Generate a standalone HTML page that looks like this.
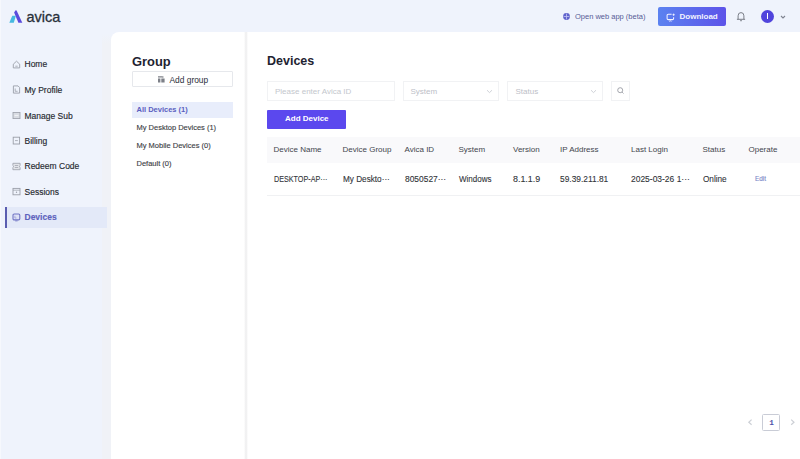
<!DOCTYPE html>
<html><head><meta charset="utf-8">
<style>
*{box-sizing:border-box;margin:0;padding:0}
html,body{width:800px;height:459px;overflow:hidden;background:#eff3fc;font-family:"Liberation Sans",sans-serif;position:relative}
.abs{position:absolute;white-space:nowrap}
#strip{position:absolute;left:101.5px;top:34px;width:10px;height:425px;background:linear-gradient(180deg,rgba(240,242,247,0) 0,#f0f2f7 10px)}
#lstrip{position:absolute;left:0;top:0;width:1px;height:459px;background:#f6f8fd}
#panel{position:absolute;left:111px;top:32px;width:689px;height:427px;background:#fff;border-top-left-radius:8px}
#divider{position:absolute;left:243.6px;top:32px;width:4px;height:427px;background:linear-gradient(90deg,rgba(250,250,250,0) 0,#ededee 50%,rgba(250,250,250,0) 100%)}
.nav{position:absolute;left:24.5px;font-size:8.5px;color:#26292f;-webkit-text-stroke:0.15px currentColor}
.navic{position:absolute;left:13px;width:7px;height:7px;border:1px solid #8a8f99;border-radius:1px}
.h{font-weight:bold;color:#1e2331;font-size:12.5px}
.th{position:absolute;top:145px;font-size:8px;color:#43464d}
.dots{font-size:8px;letter-spacing:-0.7px;color:#555a66}
.td{position:absolute;top:173.5px;font-size:8.7px;transform-origin:0 0;color:#303338;-webkit-text-stroke:0.1px currentColor}
</style></head><body>
<div id="strip"></div><div id="lstrip"></div>
<!-- logo -->
<svg class="abs" style="left:0;top:0" width="30" height="30" viewBox="0 0 30 30">
  <polygon points="14.1,12.6 15.6,10.2 16.6,10.4 22.3,22.8 18.4,22.8" fill="#5a4bdc"/>
  <polygon points="12.3,15.8 15.9,15.8 13.8,22.8 9.3,22.8" fill="#45b9e0"/>
</svg>
<div class="abs" style="left:26.5px;top:9px;font-size:14.5px;color:#28303a;-webkit-text-stroke:0.3px #28303a">avica</div>

<!-- header right -->
<svg class="abs" style="left:563px;top:13px" width="7" height="7" viewBox="0 0 7 7"><circle cx="3.5" cy="3.5" r="3.4" fill="#6063cc"/><path d="M0.6 3.5H6.4M3.5 0.6V6.4" stroke="#c3c4f2" stroke-width="0.8"/></svg>
<div class="abs" style="left:575px;top:12px;font-size:7.5px;color:#565b96">Open web app (beta)</div>
<div class="abs" style="left:658px;top:7px;width:68px;height:19px;border-radius:2px;background:linear-gradient(90deg,#5b82f0,#5d53e9)"></div>
<svg class="abs" style="left:665.5px;top:12.5px" width="10" height="9" viewBox="0 0 10 9"><path d="M5.6 1.2H2.3Q1.1 1.2 1.1 2.4V5.4Q1.1 6.6 2.3 6.6H6.4Q7.6 6.6 7.6 5.4V4.2" fill="none" stroke="#f4f4ff" stroke-width="1.05"/><path d="M7.6 0.6V2.8M6.5 1.7H8.7" stroke="#f4f4ff" stroke-width="0.9"/><path d="M3.2 8.3Q4.35 7.3 5.5 8.3" fill="none" stroke="#f4f4ff" stroke-width="0.9"/></svg>
<div class="abs" style="left:679.5px;top:11.7px;font-size:8px;font-weight:bold;color:#f3f3ff">Download</div>
<svg class="abs" style="left:736px;top:11px" width="10" height="11" viewBox="0 0 10 11"><path d="M0.9 8.3H9.1M2.1 8.3V4.8Q2.1 1.6 5 1.6Q7.9 1.6 7.9 4.8V8.3" fill="none" stroke="#7a7e87" stroke-width="1"/><path d="M4 9.4Q5 10.6 6 9.4" fill="none" stroke="#7a7e87" stroke-width="0.9"/></svg>
<div class="abs" style="left:761px;top:10px;width:13.4px;height:13.4px;border-radius:50%;background:#5044dc"></div>
<div class="abs" style="left:767px;top:13.4px;width:1.3px;height:6px;background:#fff"></div>
<svg class="abs" style="left:780px;top:15px" width="6" height="4" viewBox="0 0 6 4"><path d="M1 1L3 3L5 1" fill="none" stroke="#7f8390" stroke-width="1.1"/></svg>

<!-- sidebar -->
<svg class="abs" style="left:12px;top:60px" width="9" height="9" viewBox="0 0 9 9"><path d="M1.3 4.2L4.5 1.2L7.7 4.2V7.9H1.3Z" fill="none" stroke="#9a9ea8" stroke-width="0.9"/><path d="M3.3 6.2H5.7" stroke="#9a9ea8" stroke-width="0.8"/></svg>
<div class="nav" style="top:59.4px">Home</div>
<svg class="abs" style="left:12px;top:85px" width="9" height="9" viewBox="0 0 9 9"><path d="M1.4 0.9H6L7.6 2.5V8.1H1.4Z" fill="none" stroke="#9a9ea8" stroke-width="0.9"/><path d="M3.2 3.5V6.3H5.6" fill="none" stroke="#9a9ea8" stroke-width="0.8"/></svg>
<div class="nav" style="top:85px">My Profile</div>
<svg class="abs" style="left:12px;top:111px" width="9" height="9" viewBox="0 0 9 9"><rect x="1" y="1.4" width="7" height="6.2" fill="#d9dce3" stroke="#9a9ea8" stroke-width="0.8"/><path d="M2.5 4.5H6.5" stroke="#f2f3f6" stroke-width="0.9"/></svg>
<div class="nav" style="top:110.8px">Manage Sub</div>
<svg class="abs" style="left:12px;top:136px" width="9" height="9" viewBox="0 0 9 9"><rect x="1.2" y="1.2" width="6.4" height="6.8" fill="none" stroke="#9a9ea8" stroke-width="0.9"/><path d="M3 4.6H5.8" stroke="#9a9ea8" stroke-width="0.8"/></svg>
<div class="nav" style="top:135.9px">Billing</div>
<svg class="abs" style="left:12px;top:162px" width="9" height="9" viewBox="0 0 9 9"><path d="M0.9 1.3H8.1V3.6A1 1 0 0 0 8.1 5.4V7.7H0.9V5.4A1 1 0 0 0 0.9 3.6Z" fill="#e3e5ea" stroke="#9a9ea8" stroke-width="0.8"/><path d="M2.8 3.5H6.2M2.8 5.5H6.2" stroke="#9a9ea8" stroke-width="0.7"/></svg>
<div class="nav" style="top:161.3px">Redeem Code</div>
<svg class="abs" style="left:12px;top:187px" width="9" height="9" viewBox="0 0 9 9"><rect x="1" y="1.4" width="7" height="6.4" fill="none" stroke="#9a9ea8" stroke-width="0.9"/><path d="M1 3.2H8" stroke="#9a9ea8" stroke-width="0.7"/><circle cx="4.5" cy="5.3" r="0.7" fill="#9a9ea8"/></svg>
<div class="nav" style="top:186.7px">Sessions</div>
<div class="abs" style="left:7px;top:207px;width:100px;height:21px;background:#e3e9f8"></div>
<div class="abs" style="left:5px;top:207px;width:2px;height:21px;background:#5a5db0"></div>
<svg class="abs" style="left:12px;top:213px" width="9" height="9" viewBox="0 0 9 9"><rect x="1" y="1" width="6.8" height="5.9" rx="1.2" fill="#dde1f5" stroke="#7074c4" stroke-width="1.1"/><path d="M3.2 7.9H5.6" stroke="#7074c4" stroke-width="0.8"/><path d="M2.9 2.8V5H4.5" fill="none" stroke="#9a9dd8" stroke-width="0.8"/></svg>
<div class="nav" style="top:212.4px;color:#5d62bd;font-weight:bold">Devices</div>


<div id="panel"></div>
<div id="divider"></div>

<!-- group panel -->
<div class="abs h" style="left:132px;top:53.5px;font-size:12.9px">Group</div>
<div class="abs" style="left:132px;top:71px;width:101px;height:16.3px;border:1px solid #e6e8ec;border-radius:1px"></div>
<svg class="abs" style="left:157px;top:75px" width="9" height="9" viewBox="0 0 9 9"><path d="M1 1.2H5.5V2.6H1Z M1 3.6H3.4V7.6H1Z M4.3 3.6H7.6V7.6H4.3Z" fill="#7d8088"/><path d="M5.9 1V3" stroke="#7d8088" stroke-width="0.8"/></svg>
<div class="abs" style="left:169.5px;top:75.3px;font-size:8.4px;color:#2a2f3a">Add group</div>
<div class="abs" style="left:132px;top:101.5px;width:101px;height:16px;background:#e8edfb"></div>
<div class="abs" style="left:136.5px;top:105px;font-size:7.5px;font-weight:bold;color:#5a5fc0">All Devices (1)</div>
<div class="abs" style="left:136.5px;top:123px;font-size:7.5px;color:#3b3d43;-webkit-text-stroke:0.12px currentColor">My Desktop Devices (1)</div>
<div class="abs" style="left:136.5px;top:141px;font-size:7.5px;color:#3b3d43;-webkit-text-stroke:0.12px currentColor">My Mobile Devices (0)</div>
<div class="abs" style="left:136.5px;top:159px;font-size:7.5px;color:#3b3d43;-webkit-text-stroke:0.12px currentColor">Default (0)</div>

<!-- devices panel -->
<div class="abs h" style="left:267px;top:54px">Devices</div>
<div class="abs" style="left:267px;top:81px;width:127.5px;height:19.5px;border:1px solid #f1f2f4"></div>
<div class="abs" style="left:275px;top:87px;font-size:8px;color:#c4c7cd">Please enter Avica ID</div>
<div class="abs" style="left:403px;top:81px;width:96px;height:19.5px;border:1px solid #f1f2f4"></div>
<div class="abs" style="left:410.5px;top:86.8px;font-size:8px;color:#bdc0c7">System</div>
<div class="abs" style="left:507px;top:81px;width:95.5px;height:19.5px;border:1px solid #f1f2f4"></div>
<div class="abs" style="left:515.5px;top:86.8px;font-size:8px;color:#bdc0c7">Status</div>
<div class="abs" style="left:610.5px;top:81px;width:19.5px;height:19.5px;border:1px solid #f1f2f4"></div>
<svg class="abs" style="left:486px;top:88.8px" width="7" height="5" viewBox="0 0 7 5"><path d="M1 1.2L3.5 3.6L6 1.2" fill="none" stroke="#c4c7ce" stroke-width="0.8"/></svg>
<svg class="abs" style="left:590px;top:88.8px" width="7" height="5" viewBox="0 0 7 5"><path d="M1 1.2L3.5 3.6L6 1.2" fill="none" stroke="#c4c7ce" stroke-width="0.8"/></svg>
<svg class="abs" style="left:616px;top:86px" width="9" height="9" viewBox="0 0 9 9"><circle cx="4.2" cy="4.2" r="2.5" fill="none" stroke="#8e9199" stroke-width="0.8"/><path d="M6.1 6.1L7.5 7.5" stroke="#8e9199" stroke-width="0.8"/></svg>
<div class="abs" style="left:267px;top:110px;width:79px;height:18.5px;background:#5b48ee;border-radius:1px"></div>
<div class="abs" style="left:285px;top:114px;font-size:8px;font-weight:bold;color:#fff">Add Device</div>

<div class="abs" style="left:266.5px;top:137px;width:534px;height:25.5px;background:#f9f9fb"></div>
<div class="th" style="left:273.5px">Device Name</div>
<div class="th" style="left:342.5px">Device Group</div>
<div class="th" style="left:404.5px">Avica ID</div>
<div class="th" style="left:458.5px">System</div>
<div class="th" style="left:513px">Version</div>
<div class="th" style="left:560px">IP Address</div>
<div class="th" style="left:631px">Last Login</div>
<div class="th" style="left:702.5px">Status</div>
<div class="th" style="left:748.5px">Operate</div>
<div class="abs" style="left:266.5px;top:195px;width:534px;height:1px;background:#f0f1f3"></div>
<div class="td" id="td0" style="transform:scaleX(0.828);left:273.9px">DESKTOP-AP···</div>
<div class="td" id="td1" style="transform:scaleX(0.942);left:342.5px">My Deskto···</div>
<div class="td" id="td2" style="transform:scaleX(0.968);left:404.5px">8050527···</div>
<div class="td" id="td3" style="transform:scaleX(0.923);left:458.7px">Windows</div>
<div class="td" id="td4" style="transform:scaleX(1.023);left:512.7px">8.1.1.9</div>
<div class="td" id="td5" style="transform:scaleX(0.964);left:560.0px">59.39.211.81</div>
<div class="td" id="td6" style="transform:scaleX(0.974);left:631.2px">2025-03-26 1···</div>
<div class="td" id="td7" style="transform:scaleX(0.942);left:702.6px">Online</div>
<div class="td" id="tdE" style="left:754.9px;font-size:6.4px;color:#7884c6;top:175.2px">Edit</div>

<!-- pagination -->
<svg class="abs" style="left:746px;top:418px" width="8" height="8" viewBox="0 0 8 8"><path d="M5.6 1.6L2.8 4.2L5.6 6.8" fill="none" stroke="#cdd0d6" stroke-width="1.2"/></svg>
<div class="abs" style="left:762px;top:414px;width:17.5px;height:17.3px;border:1px solid #c9ccd6;border-radius:1.5px"></div>
<div class="abs" style="left:769.2px;top:418.6px;font-family:'Liberation Mono',monospace;font-size:7.8px;font-weight:bold;color:#4d52a8">1</div>
<svg class="abs" style="left:789px;top:418px" width="8" height="8" viewBox="0 0 8 8"><path d="M2.2 1.6L5 4.2L2.2 6.8" fill="none" stroke="#cdd0d6" stroke-width="1.2"/></svg>
</body></html>
